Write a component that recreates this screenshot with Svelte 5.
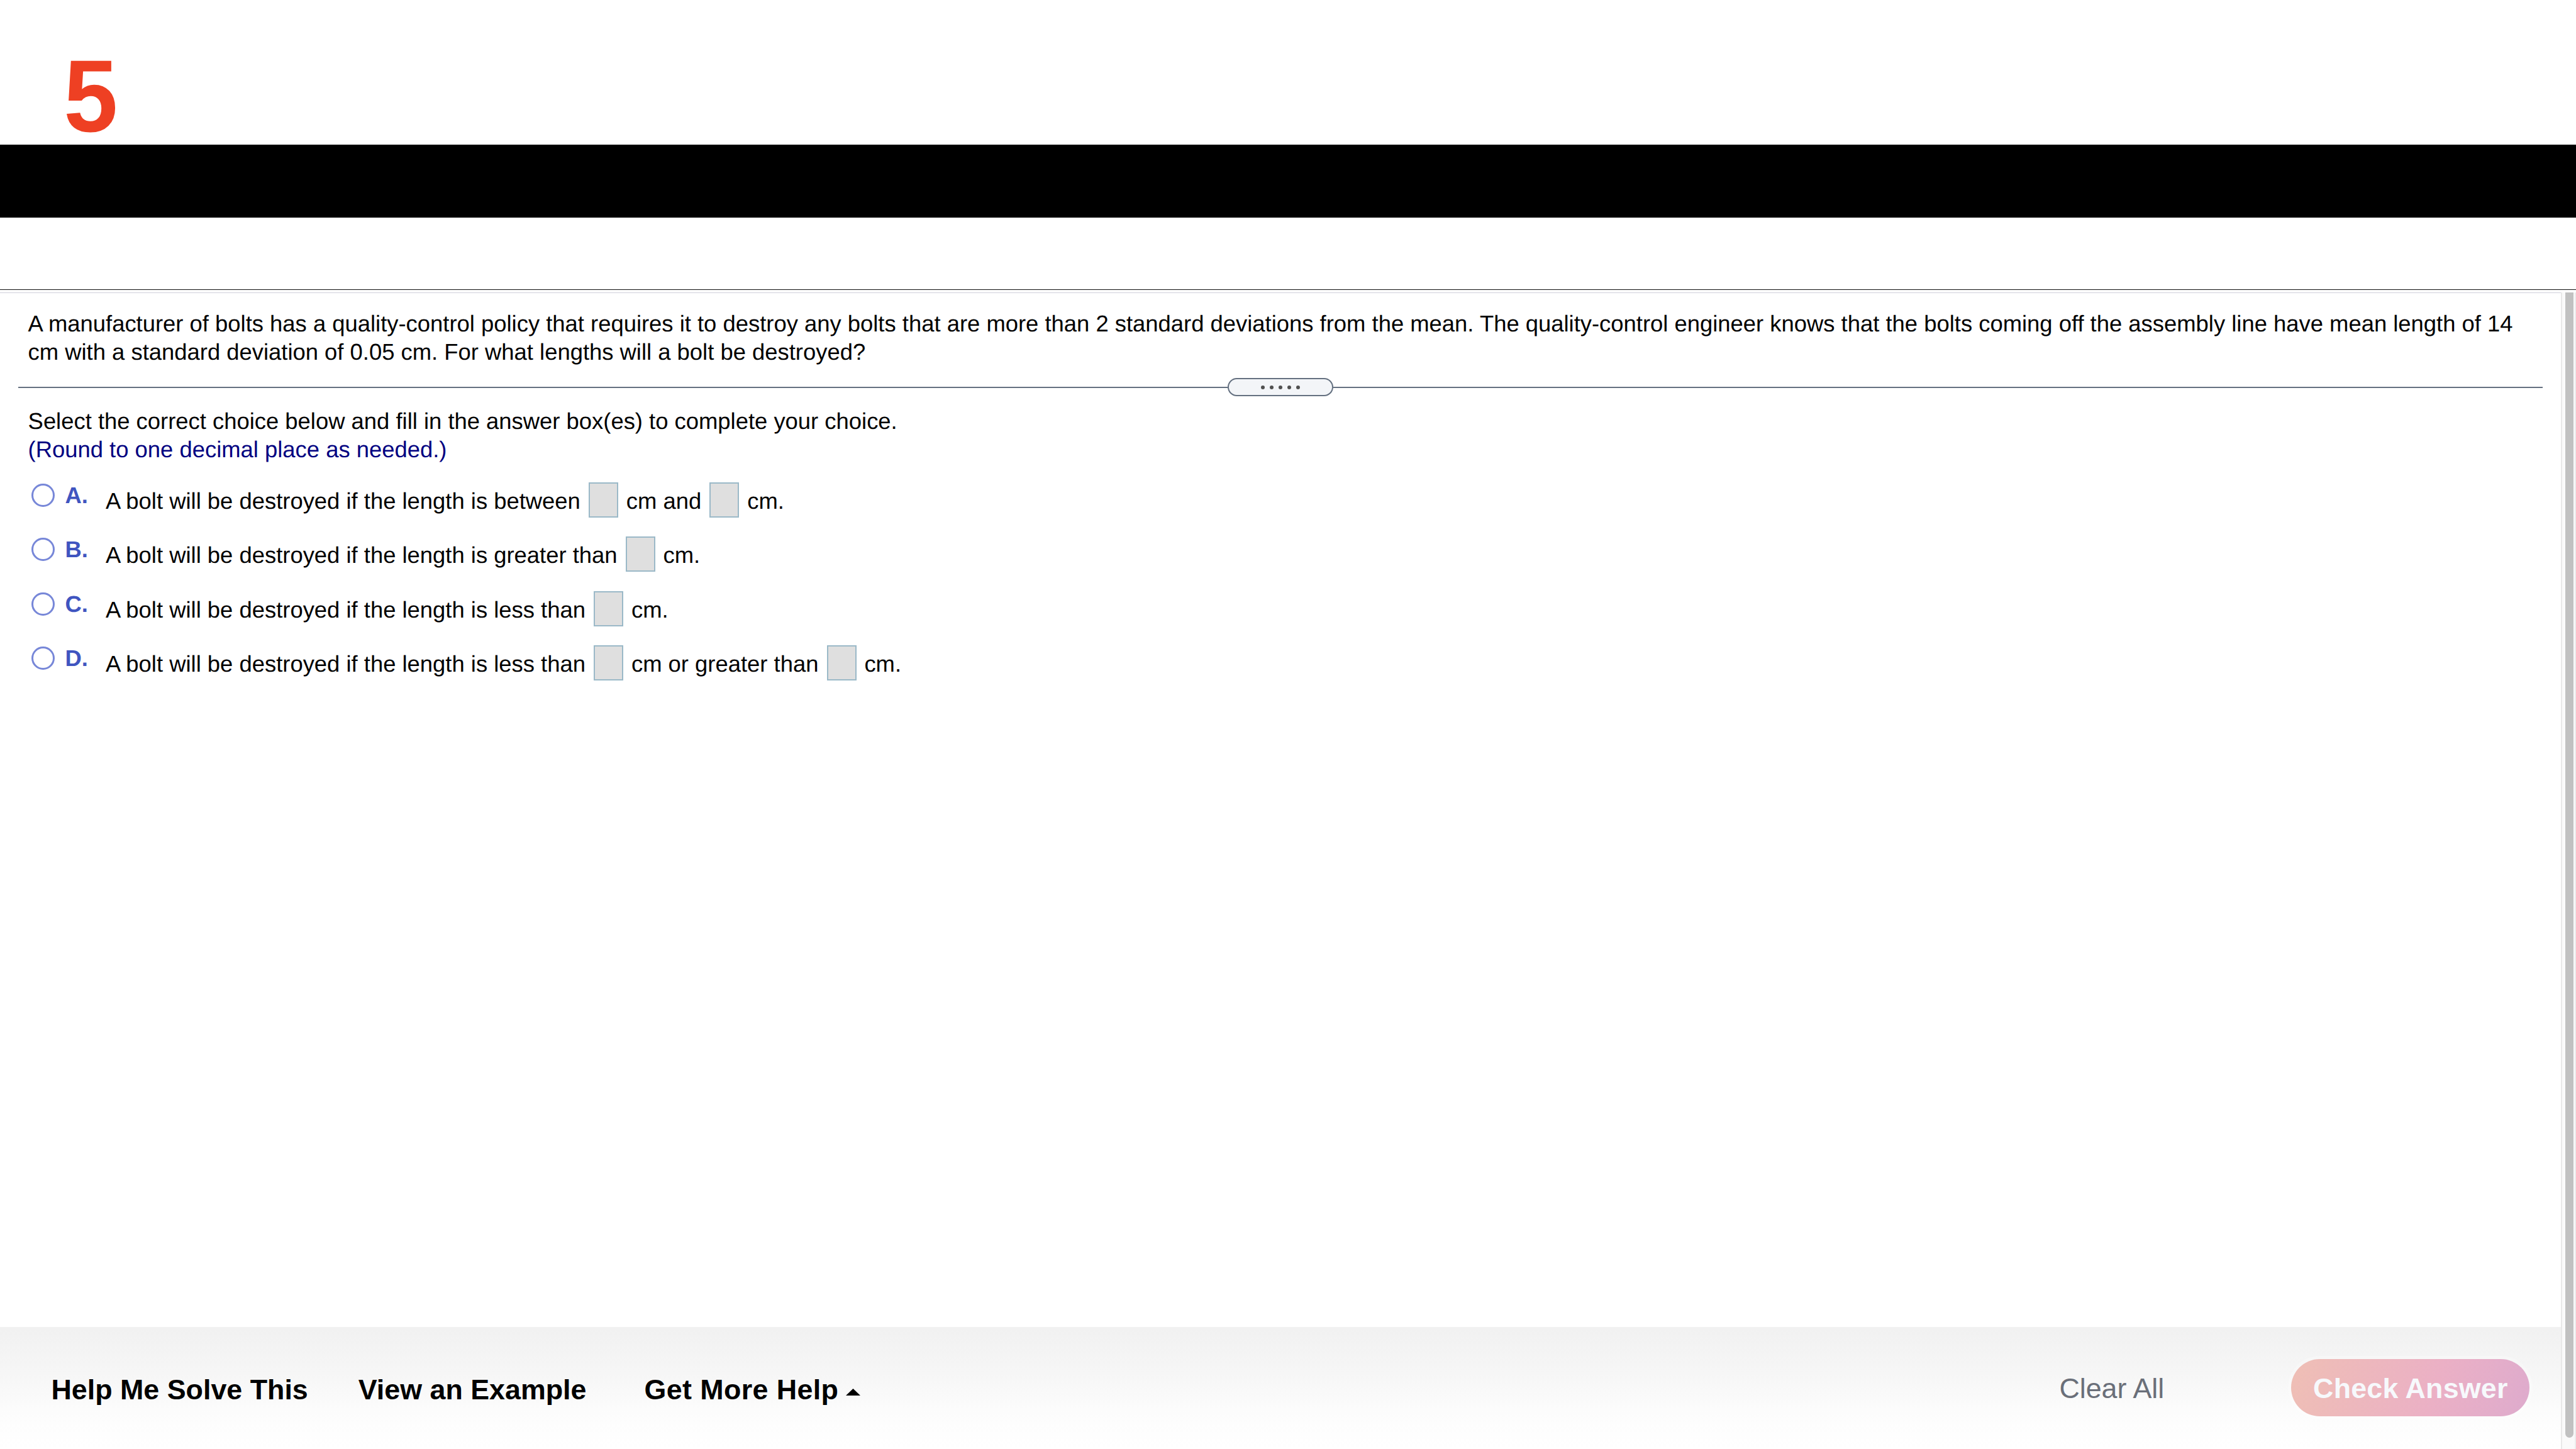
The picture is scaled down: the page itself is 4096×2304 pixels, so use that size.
<script lang="ts">
	let selected = $state('');

	// null marks an answer box inside the sentence
	const choices = [
		{ letter: 'A', parts: ['A bolt will be destroyed if the length is between', null, 'cm and', null, 'cm.'] },
		{ letter: 'B', parts: ['A bolt will be destroyed if the length is greater than', null, 'cm.'] },
		{ letter: 'C', parts: ['A bolt will be destroyed if the length is less than', null, 'cm.'] },
		{ letter: 'D', parts: ['A bolt will be destroyed if the length is less than', null, 'cm or greater than', null, 'cm.'] },
	];
</script>

<div class="page">
	<header class="number"><span>5</span></header>
	<div class="band"></div>
	<div class="spacer"></div>

	<div class="viewer">
		<div class="content">
			<p class="question">
				A manufacturer of bolts has a quality-control policy that requires it to destroy any bolts that are more than 2 standard deviations from the mean. The quality-control engineer knows that the bolts coming off the assembly line have mean length of 14<br />
				cm with a standard deviation of 0.05 cm. For what lengths will a bolt be destroyed?
			</p>

			<div class="divider">
				<span class="rule"></span>
				<span class="handle">
					<i></i><i></i><i></i><i></i><i></i>
				</span>
				<span class="rule"></span>
			</div>

			<div class="prompt">
				<p>Select the correct choice below and fill in the answer box(es) to complete your choice.</p>
				<p class="hint">(Round to one decimal place as needed.)</p>
			</div>

			<div class="choices">
				{#each choices as c}
					<div class="choice">
						<button
							class="radio"
							class:checked={selected === c.letter}
							aria-label="Choice {c.letter}"
							onclick={() => (selected = c.letter)}
						></button>
						<span class="letter">{c.letter}.</span>
						<div class="sentence">
							{#each c.parts as part}
								{#if part === null}
									<span class="box"></span>
								{:else}
									<span class="text">{part}</span>
								{/if}
							{/each}
						</div>
					</div>
				{/each}
			</div>

			<footer class="footer">
				<button class="link solve">Help Me Solve This</button>
				<button class="link example">View an Example</button>
				<button class="link more">
					Get More Help
					<svg width="23" height="11" viewBox="0 0 23 11">
						<path d="M11.5 0L23 11H0z" fill="#000" />
					</svg>
				</button>
				<button class="clear">Clear All</button>
				<button class="check">Check Answer</button>
			</footer>
		</div>

		<div class="scrollbar">
			<div class="thumb"></div>
		</div>
	</div>
</div>

<style>
	:global(body) {
		margin: 0;
		background: #fff;
	}

	.page {
		width: 4096px;
		height: 2304px;
		display: flex;
		flex-direction: column;
		overflow: hidden;
		background: #fff;
		color: #000;
		font-family: 'Liberation Sans', Arial, sans-serif;
		font-size: 36.41px;
		line-height: 44.8px;
		text-rendering: geometricPrecision;
		white-space: nowrap;
	}

	p {
		margin: 0;
	}

	button {
		margin: 0;
		padding: 0;
		border: 0;
		background: none;
		font: inherit;
		color: inherit;
		white-space: nowrap;
	}

	.number {
		box-sizing: border-box;
		height: 230.4px;
		padding: 62px 0 0 99px;
		color: #ee4023;
		font-size: 163px;
		font-weight: 700;
		line-height: 182px;
	}

	.number span {
		display: inline-block;
		transform: scaleX(0.95);
	}

	.band {
		height: 115.2px;
		background: #000;
	}

	.spacer {
		box-sizing: border-box;
		height: 115.2px;
		border-bottom: 1px solid #111;
	}

	.viewer {
		flex: 1;
		display: flex;
		margin-top: 4px;
	}

	.content {
		width: 4072px;
		display: flex;
		flex-direction: column;
		box-sizing: border-box;
		border-top: 1px solid #d0d0da;
	}

	.question {
		padding: 27.5px 0 0 44.6px;
	}

	.divider {
		display: flex;
		align-items: center;
		height: 29px;
		margin: 18.5px 28.8px 0;
	}

	.rule {
		flex: 1;
		height: 2px;
		background: #647080;
	}

	.rule:first-child {
		flex: 0 0 1923px;
	}

	.handle {
		box-sizing: border-box;
		width: 168px;
		height: 29px;
		display: flex;
		align-items: center;
		justify-content: center;
		gap: 7.6px;
		border: 2px solid #647080;
		border-radius: 15px;
		background: #f3f5f8;
	}

	.handle i {
		width: 6.4px;
		height: 6.4px;
		border-radius: 50%;
		background: #505050;
	}

	.prompt {
		padding: 18px 0 0 44.6px;
	}

	.hint {
		color: #000080;
	}

	.choices {
		flex: 1;
		padding: 29px 0 0 50px;
	}

	.choice {
		display: grid;
		grid-template-columns: 53.4px 64.6px 1fr;
		align-items: start;
		height: 86.5px;
	}

	.radio {
		box-sizing: border-box;
		width: 37px;
		height: 37px;
		margin-top: 2px;
		border: 3px solid #7787d8;
		border-radius: 50%;
		background: #fff;
	}

	.radio.checked {
		background: #3f55c0;
	}

	.letter {
		margin-top: -1px;
		color: #3f55c0;
		font-weight: 700;
	}

	.sentence {
		display: flex;
		align-items: flex-start;
	}

	.text {
		padding-top: 8px;
	}

	.box {
		box-sizing: border-box;
		width: 47px;
		height: 56px;
		margin: 0 12.8px 0 13.2px;
		border: 2px solid #9bb9c8;
		background: #dfdfdf;
	}

	.footer {
		box-sizing: border-box;
		height: 193.6px;
		display: flex;
		align-items: center;
		padding: 0 49.6px 1px 81.5px;
		background: linear-gradient(#f1f1f1, #f6f6f6 38%, #fcfcfc 68%, #fff);
		font-size: 44.8px;
		line-height: 52px;
	}

	.link {
		font-weight: 700;
		padding-top: 4px;
	}

	.example {
		margin-left: 80px;
	}

	.more {
		display: flex;
		align-items: center;
		gap: 12px;
		margin-left: 92px;
		letter-spacing: 0.4px;
	}

	.more svg {
		margin-top: 9px;
	}

	.clear {
		margin-left: auto;
		color: #6a6f79;
	}

	.check {
		width: 379.2px;
		height: 91.2px;
		margin-left: 202px;
		border-radius: 45.6px;
		background: linear-gradient(105deg, #efbfb5, #ebb0c5 60%, #deabcd);
		box-shadow: 0 0 0 5px rgba(255, 255, 255, 0.25);
		color: #f7f9fc;
		font-weight: 700;
		letter-spacing: 0.2px;
	}

	.scrollbar {
		box-sizing: border-box;
		width: 24px;
		padding-left: 4.8px;
		border-left: 2px solid #e8e8e8;
		border-right: 2px solid #ededed;
		background: #fafafa;
	}

	.thumb {
		width: 13px;
		height: 1821.6px;
		border-radius: 0 0 6.5px 6.5px;
		background: #c1c1c1;
	}
</style>
